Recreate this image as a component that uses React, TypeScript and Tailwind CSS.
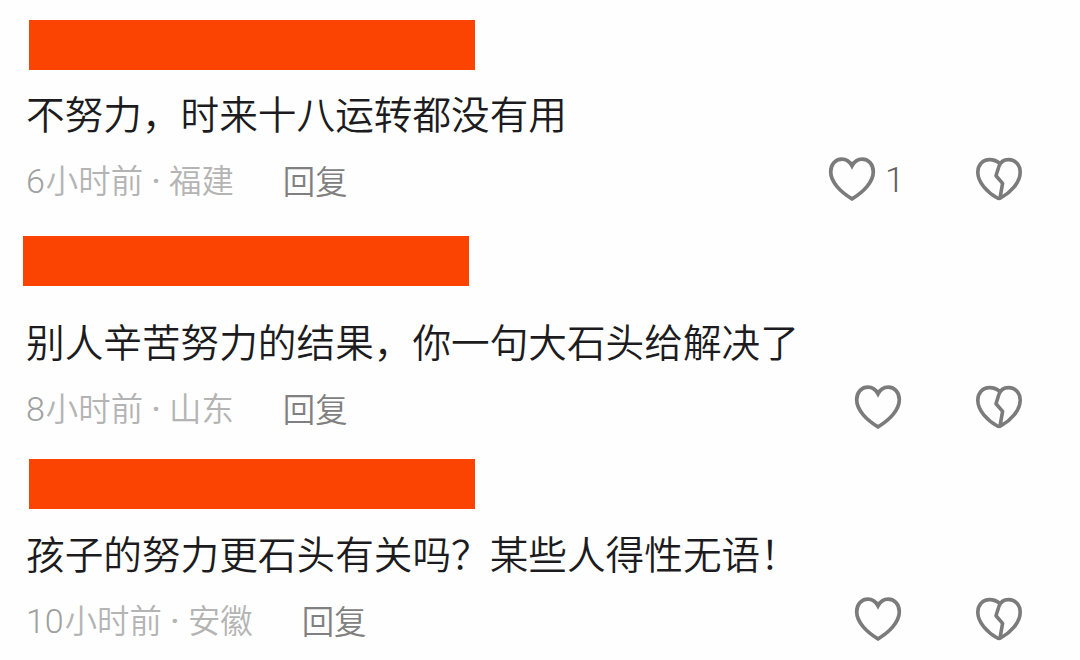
import clsx from "clsx";

type Comment = {
    id: number;
    hours: string;
    place: string;
    text: string;
    likes?: number;
    rowClass: string;
    barClass: string;
    textClass: string;
};

const comments: Comment[] = [
    {
        id: 1,
        hours: "6",
        place: "福建",
        text: "不努力，时来十八运转都没有用",
        likes: 1,
        rowClass: "pt-[20px] h-[236px]",
        barClass: "ml-[29px] w-[446px]",
        textClass: "mt-[14px]",
    },
    {
        id: 2,
        hours: "8",
        place: "山东",
        text: "别人辛苦努力的结果，你一句大石头给解决了",
        rowClass: "h-[223px]",
        barClass: "ml-[23px] w-[446px]",
        textClass: "mt-[26px]",
    },
    {
        id: 3,
        hours: "10",
        place: "安徽",
        text: "孩子的努力更石头有关吗？某些人得性无语！",
        rowClass: "h-[201px]",
        barClass: "ml-[29px] w-[446px]",
        textClass: "mt-[15px]",
    },
];

function HeartIcon() {
    return (
        <svg className="h-[48px] w-[48px]" viewBox="0 0 48 48" fill="none" stroke="#7b7b7b" strokeWidth="3.7">
            <path d="M24 10.8C21.8 6.6 18.2 4.2 13.8 4.2C7.3 4.2 2.7 9.6 2.7 16.8C2.7 27 12.6 37 24 43.8C35.4 37 45.3 27 45.3 16.8C45.3 9.6 40.7 4.2 34.2 4.2C29.8 4.2 26.2 6.6 24 10.8Z" />
        </svg>
    );
}

function BrokenHeartIcon() {
    return (
        <svg className="h-[48px] w-[48px]" viewBox="0 0 48 48" fill="none" stroke="#7b7b7b" strokeWidth="3.6" strokeLinejoin="round">
            <path d="M25 8.6C22 5.9 18.6 4.6 14.6 4.6C7.6 4.6 2.8 10 2.8 17.2C2.8 27.5 12.5 37.5 22 42.8Q24 44 26 42.8C35.5 37.5 45.2 27.5 45.2 17.2C45.2 10 40.4 4.6 33.6 4.6C28.6 4.6 25.2 7.4 23.8 11.8L21 20.8L27.6 28.4L25 43" />
        </svg>
    );
}

function CommentItem({ comment }: { comment: Comment }) {
    return (
        <article className={clsx("shrink-0", comment.rowClass)}>
            <div className={clsx("h-[50px] bg-[#fc4402]", comment.barClass)}></div>
            <p className={clsx("ml-[26px] h-[56px] whitespace-nowrap font-[350] text-[38.65px] leading-[56px] text-[#1c1c20]", comment.textClass)}>
                {comment.text}
            </p>
            <div className="mt-[15px] flex h-[48px] items-center pl-[26px] pr-[57px] text-[32.4px] leading-[48px]">
                <div className="flex items-baseline gap-[9px] pt-[2px] whitespace-nowrap font-[350] text-[#b4b4b4]">
                    <span>
                        <span className="mr-px font-[Roboto] text-[34px] font-light text-[#a0a0a0]">{comment.hours}</span>小时前
                    </span>
                    <span className="-mx-px w-[10px] text-center font-[Roboto] font-medium">·</span>
                    <span>{comment.place}</span>
                </div>
                <button type="button" className="ml-[49px] pt-px font-[350] text-[#808080]">回复</button>
                <div className="ml-auto flex items-center">
                    <button type="button" className="flex items-center">
                        <HeartIcon />
                        {comment.likes ? (
                            <span className="mt-[3px] ml-[9px] w-[17px] font-[Roboto] text-[35px] font-light text-[#606060]">{comment.likes}</span>
                        ) : null}
                    </button>
                    <button type="button" className="ml-[73px]">
                        <BrokenHeartIcon />
                    </button>
                </div>
            </div>
        </article>
    );
}

export default function App() {
    return (
        <main className="flex h-[660px] w-[1080px] flex-col overflow-hidden bg-[#fefefe] font-['Noto_Sans_CJK_SC',sans-serif]">
            {comments.map((comment) => <CommentItem comment={comment} key={comment.id} />)}
        </main>
    );
}
